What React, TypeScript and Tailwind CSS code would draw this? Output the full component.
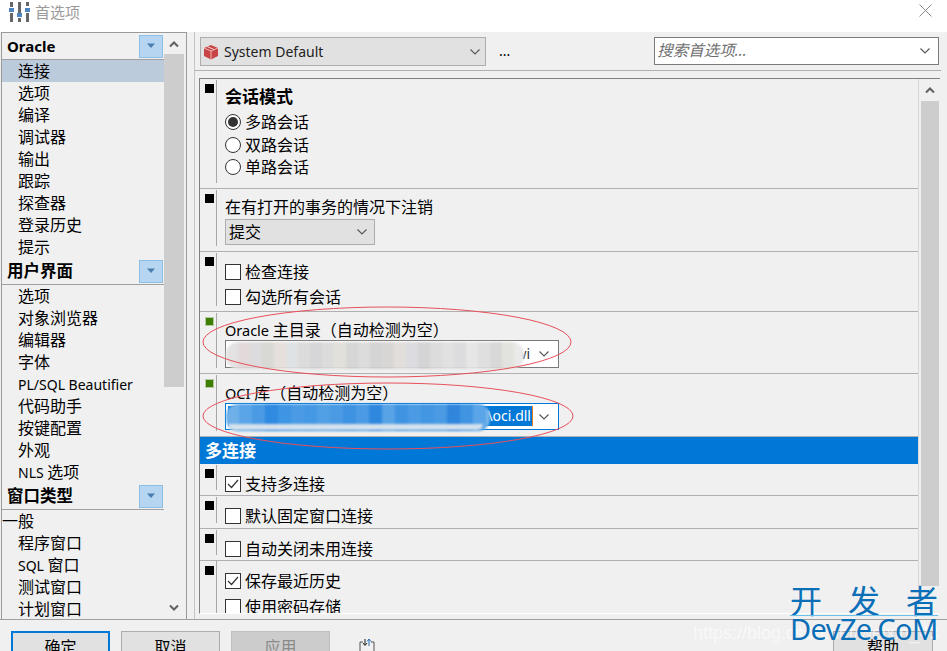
import React from "react";

const font = "font-['Noto_Sans','Noto_Sans_CJK_SC',sans-serif]";

function Mixed({ s }: { s: string }) {
  const parts = s.split(/([A-Za-z/.\- ]+)/).filter(Boolean);
  return (
    <span>
      {parts.map((p, i) =>
        /^[A-Za-z/.\- ]+$/.test(p) ? <span key={i} className="text-[14px]">{p}</span> : <span key={i}>{p}</span>
      )}
    </span>
  );
}

function Marker({ green }: { green?: boolean }) {
  return <div className={green ? "w-[9px] h-[9px] bg-[#3f7f00] border border-[#b5c8a5]" : "w-[9px] h-[9px] bg-black"} />;
}

function Chevron({ className = "", color = "#555" }: { className?: string; color?: string }) {
  return (
    <svg width="12" height="8" viewBox="0 0 12 8" className={className}>
      <path d="M1.5 1.5 L6 6 L10.5 1.5" fill="none" stroke={color} strokeWidth="1.1" />
    </svg>
  );
}

function ScrollArrow({ up }: { up?: boolean }) {
  return (
    <svg width="10" height="8" viewBox="0 0 10 8">
      <path d={up ? "M1 6.5 L5 2.5 L9 6.5" : "M1 1.5 L5 5.5 L9 1.5"} fill="none" stroke="#606060" strokeWidth="2" />
    </svg>
  );
}

function Header({ label, latin }: { label: string; latin?: boolean }) {
  return (
    <div className="h-[27px] flex items-center justify-between border-b border-[#a0a0a0] pl-[5px] pr-px shrink-0 bg-[#f0f0f0]">
      <span className={`font-bold leading-none ${latin ? "text-[15px]" : "text-[16.5px]"}`}>{label}</span>
      <div className="w-[24px] h-[23px] bg-[#b5d5f0] border border-[#8cbfe8] flex items-center justify-center">
        <svg width="10" height="6" viewBox="0 0 10 6"><path d="M1 0.5 H9 L5 5 Z" fill="#4a7cb0" /></svg>
      </div>
    </div>
  );
}

function Item({ label, active, flush }: { label: string; active?: boolean; flush?: boolean }) {
  return (
    <div className={`h-[22px] flex items-center text-[16px] leading-none shrink-0 ${flush ? "pl-0" : "pl-[16px]"} ${active ? "bg-[#bccbdb]" : ""}`}>
      <Mixed s={label} />
    </div>
  );
}

function Section({ children, h, green }: { children: React.ReactNode; h: number; green?: boolean }) {
  return (
    <div className="flex border-b border-[#b0b0b0] shrink-0 overflow-hidden" style={{ height: h }}>
      <div className="w-[16px] shrink-0 pl-[5px] pt-[5px]"><Marker green={green} /></div>
      <div className="border-l border-[#a8a8a8] my-[1px] mb-[5px] pl-[8px] flex-1 flex flex-col min-w-0">{children}</div>
    </div>
  );
}

function Radio({ on, label }: { on?: boolean; label: string }) {
  return (
    <div className="h-[22.5px] flex items-center gap-[4px] text-[16px] leading-none">
      <div className="w-[16px] h-[16px] rounded-full border border-[#333] bg-white flex items-center justify-center">
        {on && <div className="w-[10px] h-[10px] rounded-full bg-[#333]" />}
      </div>
      {label}
    </div>
  );
}

function Check({ on, label }: { on?: boolean; label: string }) {
  return (
    <div className="flex items-center gap-[4px] text-[16px] leading-none h-[22px]">
      <div className="w-[16px] h-[16px] border border-[#333] bg-white flex items-center justify-center">
        {on && (
          <svg width="12" height="10" viewBox="0 0 12 10"><path d="M1 5 L4.5 8.5 L11 1" fill="none" stroke="#333" strokeWidth="1.2" /></svg>
        )}
      </div>
      {label}
    </div>
  );
}

const mosaicGrey = ["#e4e2e2", "#e2dada", "#dcdcdf", "#d8d8d4", "#e6e0dc", "#dfe2e4", "#dcdcdc", "#d6d6d8", "#dcdcdc", "#e2e0da", "#d6d6d6", "#dcdcdc", "#d4d4d4", "#d8d6d4", "#e2dedc", "#dcdce0", "#d4d4d6", "#dcdcdc", "#e2e0e0", "#dcdcde", "#e6e6e6", "#e0dfe0", "#d8d8d8", "#e2e2de", "#eaeaea"];
const mosaicBlue = ["#6fb0e8", "#5aa5e8", "#4a9ae4", "#2f8ae0", "#3d95e4", "#4a9be4", "#4599e4", "#519fe4", "#4a9ae4", "#3e92e2", "#4a9be4", "#2f88de", "#58a2e6", "#3f94e2", "#4b9be4", "#4296e2", "#4a9ae4", "#2f86dc", "#4095e2", "#5aa5e8", "#78b6ea"];

function Mosaic({ colors, cell }: { colors: string[]; cell: number }) {
  return (
    <div className="flex h-full overflow-hidden rounded-[12px] blur-[1px]">
      {colors.map((c, i) => (
        <div key={i} className="h-full shrink-0" style={{ width: cell, background: c }} />
      ))}
    </div>
  );
}

export default function App() {
  const oracle = ["选项", "编译", "调试器", "输出", "跟踪", "探查器", "登录历史", "提示"];
  const ui = ["选项", "对象浏览器", "编辑器", "字体", "PL/SQL Beautifier", "代码助手", "按键配置", "外观", "NLS 选项"];
  const win = ["程序窗口", "SQL 窗口", "测试窗口", "计划窗口"];
  return (
    <div className={`${font} relative w-[947px] h-[651px] overflow-hidden bg-[#f0f0f0] text-black`}>
      {/* title bar */}
      <div className="h-[32px] bg-white flex items-center pl-[9px] pr-[15px] justify-between">
        <div className="flex items-center gap-[5px] -mt-[8px]">
          <svg width="21" height="20" viewBox="0 0 21 20">
            <g fill="#666">
              <rect x="1" y="0" width="3" height="5" /><rect x="1" y="11" width="3" height="9" />
              <rect x="9" y="0" width="3" height="11" /><rect x="9" y="16" width="3" height="4" />
              <rect x="17" y="0" width="3" height="4" /><rect x="17" y="11" width="3" height="9" />
            </g>
            <g fill="#4c84bd">
              <rect x="0" y="6" width="5" height="4" /><rect x="8" y="11" width="5" height="4" /><rect x="16" y="6" width="5" height="4" />
            </g>
          </svg>
          <span className="text-[15px] leading-none text-[#9a9a9a]">首选项</span>
        </div>
        <svg width="13" height="13" viewBox="0 0 13 13" className="-mt-[12px]"><path d="M0.5 0.5 L12.5 12.5 M12.5 0.5 L0.5 12.5" stroke="#8c8c8c" strokeWidth="1" /></svg>
      </div>

      {/* main */}
      <div className="flex h-[588px] border-b border-[#a0a0a0]">
        <div className="w-[187px] shrink-0 pl-px flex">
          <div className="flex-1 flex border-t border-l border-r border-[#9a9a9a] min-w-0">
            <div className="flex-1 flex flex-col overflow-hidden min-w-0">
              <Header label="Oracle" latin />
              <Item label="连接" active />
              {oracle.map((o) => <Item key={o} label={o} />)}
              <Header label="用户界面" />
              {ui.map((o) => <Item key={o} label={o} />)}
              <Header label="窗口类型" />
              <Item label="一般" flush />
              {win.map((o) => <Item key={o} label={o} />)}
            </div>
            <div className="w-[22px] shrink-0 flex flex-col">
              <div className="h-[21px] flex items-center justify-center shrink-0 pr-[2px]"><ScrollArrow up /></div>
              <div className="h-[333px] bg-[#cdcdcd] mr-[2px] shrink-0" />
              <div className="flex-1" />
              <div className="h-[22px] flex items-center justify-center shrink-0 pr-[2px]"><ScrollArrow /></div>
            </div>
          </div>
        </div>
        <div className="w-[7px] shrink-0" />
        <div className="flex-1 flex flex-col border-l border-[#c4c4c4] pr-[6px] bg-[#f0f0f0] min-w-0">
          {/* toolbar */}
          <div className="h-[39px] shrink-0 border-b border-[#b0b0b0] flex items-start pt-[5px] pl-[5px]">
            <div className="w-[286px] h-[29px] border border-[#adadad] bg-[#e1e1e1] flex items-center justify-between pl-[2px] pr-[4px]">
              <div className="flex items-center gap-[5px]">
                <svg width="16" height="16" viewBox="0 0 16 16">
                  <path d="M8 1 L15 4 L15 12 L8 15.5 L1 12 L1 4 Z" fill="#c94545" />
                  <path d="M1 4 L8 7 L15 4 M8 7 V15.5" stroke="#f3d0d0" strokeWidth="0.8" fill="none" />
                  <path d="M4 2.5 L11 5.5" stroke="#f3d0d0" strokeWidth="1" fill="none" />
                </svg>
                <span className="text-[14px] leading-none text-[#222]">System Default</span>
              </div>
              <Chevron />
            </div>
            <span className="ml-[13px] mt-[7px] text-[14px] leading-none">...</span>
            <div className="ml-[144px] w-[285px] h-[28px] border border-[#7a7a7a] bg-white flex items-center justify-between pl-[2px] pr-[7px]">
              <span className="italic text-[15.5px] leading-none text-[#707070]">搜索首选项...</span>
              <Chevron />
            </div>
          </div>

          {/* content */}
          <div className="mt-[7px] ml-[4px] mr-[1px] mb-[5px] flex-1 border-l border-t border-b border-t-[#808080] border-l-[#808080] border-b-white flex min-h-0 bg-[#f0f0f0]">
            <div className="flex-1 flex flex-col min-w-0 overflow-hidden">
              <Section h={110}>
                <div className="pt-[6px] font-bold text-[17px] leading-[22px] h-[31px]">会话模式</div>
                <Radio on label="多路会话" />
                <Radio label="双路会话" />
                <Radio label="单路会话" />
              </Section>
              <Section h={63}>
                <div className="pt-[6px] text-[16px] leading-[22px] h-[29px]">在有打开的事务的情况下注销</div>
                <div className="w-[150px] h-[26px] border border-[#adadad] bg-[#e1e1e1] flex items-center justify-between pl-[3px] pr-[6px] text-[16px] leading-none">
                  提交<Chevron />
                </div>
              </Section>
              <Section h={60}>
                <div className="pt-[8px]"><Check label="检查连接" /></div>
                <div className="pt-[3px]"><Check label="勾选所有会话" /></div>
              </Section>
              <Section h={62} green>
                <div className="pt-[7px] text-[16px] leading-[20px] h-[27px]"><span className="text-[14.5px]">Oracle </span>主目录（自动检测为空）</div>
                <div className="w-[334px] h-[28px] border border-[#7a7a7a] bg-white flex items-center justify-end pr-[8px] relative">
                  <div className="absolute left-0 top-[1px] h-[27px] w-[298px]"><Mosaic colors={mosaicGrey} cell={12} /></div>
                  <span className="text-[14px] leading-none mr-[8px] text-[#333]">wi</span>
                  <Chevron />
                </div>
              </Section>
              <Section h={63} green>
                <div className="pt-[8px] text-[16px] leading-[20px] h-[28px]"><span className="text-[14.5px]">OCI </span>库（自动检测为空）</div>
                <div className="w-[334px] h-[27px] border border-[#0078d7] bg-white flex items-center justify-end pr-[8px] relative">
                  <div className="absolute left-[2px] top-[2px] bottom-[3px] right-[25px] bg-[#0078d7] flex items-center justify-end border-r border-[#e87a20]">
                    <span className="text-[14px] leading-none text-white pr-px">\oci.dll</span>
                  </div>
                  <div className="absolute left-0 top-0 h-[27px] w-[264px]"><Mosaic colors={mosaicBlue} cell={13} /></div>
                  <div className="absolute left-[2px] top-[20px] h-[6px] w-[255px] bg-[#d5e1ec] blur-[1px] rounded-b-[6px]" />
                  <Chevron className="relative" />
                </div>
              </Section>
              <div className="h-[27px] shrink-0 bg-[#0078d7] text-white font-bold text-[17px] leading-none flex items-center pl-[5px]">多连接</div>
              <Section h={32}>
                <div className="pt-[8px]"><Check on label="支持多连接" /></div>
              </Section>
              <Section h={33}>
                <div className="pt-[8px]"><Check label="默认固定窗口连接" /></div>
              </Section>
              <Section h={32}>
                <div className="pt-[8px]"><Check label="自动关闭未用连接" /></div>
              </Section>
              <div className="flex flex-1 min-h-0 overflow-hidden">
                <div className="w-[16px] shrink-0 pl-[5px] pt-[5px]"><Marker /></div>
                <div className="border-l border-[#a8a8a8] pl-[8px] flex-1 flex flex-col">
                  <div className="pt-[9px]"><Check on label="保存最近历史" /></div>
                  <div className="pt-[4px]"><Check label="使用密码存储" /></div>
                </div>
              </div>
            </div>
            <div className="w-[22px] shrink-0 flex flex-col border-l border-[#d8d8d8]">
              <div className="h-[22px] flex items-center justify-center shrink-0"><ScrollArrow up /></div>
              <div className="h-[485px] bg-[#cdcdcd] ml-[2px] mr-[1px] shrink-0" />
            </div>
          </div>
        </div>
      </div>

      {/* footer */}
      <div className="flex items-start pl-[11px] pt-[11px] text-[16px] leading-none">
        <button className="w-[99px] h-[40px] border-2 border-[#0078d7] bg-[#e1e1e1] pt-[6px] flex justify-center items-start">确定</button>
        <button className="ml-[11px] w-[99px] h-[40px] border border-[#adadad] bg-[#e1e1e1] pt-[7px] flex justify-center items-start">取消</button>
        <button className="ml-[11px] w-[99px] h-[40px] border border-[#bfbfbf] bg-[#cccccc] pt-[7px] flex justify-center items-start text-[#8a8a8a]">应用</button>
        <svg width="16" height="14" viewBox="0 0 16 14" className="ml-[29px] mt-[7px]">
          <path d="M1 13 V4 H4 M12 4 H15 V13" fill="none" stroke="#555" />
          <path d="M6 1 V7 M4 5 L6 7.5 L8 5" fill="none" stroke="#222" />
          <path d="M10 8 V1.5 M8 3.5 L10 1 L12 3.5" fill="none" stroke="#2a6fb5" />
        </svg>
        <button className="ml-auto mr-[14px] w-[100px] h-[40px] border border-[#adadad] bg-[#e1e1e1] pt-[7px] flex justify-center items-start">帮助</button>
      </div>

      {/* annotation ellipses */}
      <svg width="947" height="651" className="absolute inset-0 pointer-events-none">
        <ellipse cx="387" cy="342" rx="184" ry="35" fill="none" stroke="#e8505a" strokeWidth="1" />
        <ellipse cx="388" cy="416" rx="185" ry="33" fill="none" stroke="#e8505a" strokeWidth="1" />
      </svg>

      {/* watermark */}
      <div className="absolute left-[693px] top-[624px] text-[18px] leading-none text-white/60 font-['Liberation_Sans',sans-serif] whitespace-nowrap">https://blog.csdn.net/weixin_43</div>
      <div className="absolute left-[790px] top-[583px] w-[148px] text-[#0b6fb8] leading-none flex flex-col items-stretch">
        <div className="flex justify-between text-[32px] leading-[32px] font-['Noto_Sans_CJK_SC',sans-serif]">
          <span>开</span><span>发</span><span>者</span>
        </div>
        <div className="border-t border-[#6cc0ea]" />
        <div className="text-[29px] leading-[26px] font-['Noto_Sans',sans-serif] whitespace-nowrap tracking-[-0.6px]">DevZe.CoM</div>
      </div>
    </div>
  );
}
